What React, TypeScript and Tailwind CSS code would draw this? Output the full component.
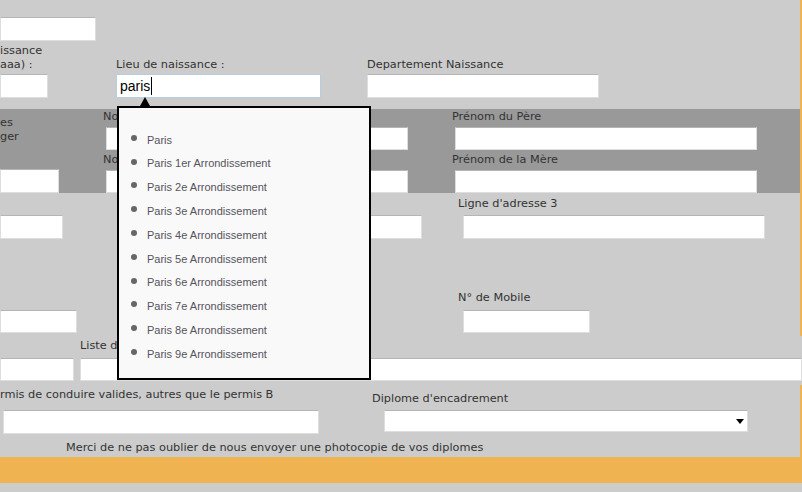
import React from 'react';

const ORANGE = 'border-[#efb451]';

const field = 'block bg-white border border-[#dedede] border-t-[#b5b5b5] outline-none';

const CITIES = [
  'Paris',
  'Paris 1er Arrondissement',
  'Paris 2e Arrondissement',
  'Paris 3e Arrondissement',
  'Paris 4e Arrondissement',
  'Paris 5e Arrondissement',
  'Paris 6e Arrondissement',
  'Paris 7e Arrondissement',
  'Paris 8e Arrondissement',
  'Paris 9e Arrondissement',
];

function Label({ children, className = '' }: { children: React.ReactNode; className?: string }) {
  return <div className={`leading-[14px] whitespace-nowrap ${className}`}>{children}</div>;
}

export default function App() {
  return (
    <div className="relative w-[802px] h-[492px] overflow-hidden bg-[#cccccc] font-['DejaVu_Sans',sans-serif] text-[11.3px] text-[#333]">
      {/* identite / naissance */}
      <div className={`h-[109px] pt-[17px] border-r-2 ${ORANGE}`}>
        <input className={`${field} w-[96px] h-[24px]`} readOnly />
        <div className="flex items-end mt-[3px]">
          <div className="w-[48px]">
            <Label>issance<br />aaa) :</Label>
            <input className={`${field} w-[48px] h-[24px] mt-[2px]`} readOnly />
          </div>
          <div className="ml-[68px] w-[205px]">
            <Label>Lieu de naissance :</Label>
            <div className="mt-[2px] w-[205px] h-[24px] bg-white border border-[#b9cde0] flex items-center pl-[3px] font-['Liberation_Sans',sans-serif] text-[14px] text-black">
              paris<span className="w-px h-[18px] bg-black ml-px" />
            </div>
          </div>
          <div className="ml-[46px] w-[232px]">
            <Label>Departement Naissance</Label>
            <input className={`${field} w-[232px] h-[24px] mt-[2px]`} readOnly />
          </div>
        </div>
      </div>

      {/* parents */}
      <div className={`h-[84px] bg-[#999999] border-r-2 ${ORANGE} flex`}>
        <div className="w-[59px] pt-[7px]">
          <Label>es</Label>
          <Label>ger</Label>
          <input className={`${field} w-[59px] h-[24px] mt-[25px]`} readOnly />
        </div>
        <div className="ml-[44px] pt-[1px]">
          <Label>No</Label>
          <input className={`${field} ml-[3px] mt-[3px] w-[302px] h-[23px]`} readOnly />
          <Label className="mt-[3px]">No</Label>
          <input className={`${field} ml-[3px] mt-[3px] w-[302px] h-[23px]`} readOnly />
        </div>
        <div className="ml-[44px] pt-[1px]">
          <Label>Prénom du Père</Label>
          <input className={`${field} ml-[3px] mt-[3px] w-[302px] h-[23px]`} readOnly />
          <Label className="mt-[3px]">Prénom de la Mère</Label>
          <input className={`${field} ml-[3px] mt-[3px] w-[302px] h-[23px]`} readOnly />
        </div>
      </div>

      {/* adresse */}
      <div className={`h-[143px] pt-[4px] border-r-2 ${ORANGE}`}>
        <Label className="pl-[458px]">Ligne d'adresse 3</Label>
        <div className="flex mt-[4px]">
          <input className={`${field} w-[63px] h-[24px]`} readOnly />
          <input className={`${field} ml-[57px] w-[302px] h-[24px]`} readOnly />
          <input className={`${field} ml-[41px] w-[302px] h-[24px]`} readOnly />
        </div>
        <Label className="pl-[458px] mt-[52px]">N° de Mobile</Label>
        <div className="flex mt-[5px]">
          <input className={`${field} w-[77px] h-[23px]`} readOnly />
          <input className={`${field} ml-[386px] w-[127px] h-[23px]`} readOnly />
        </div>
      </div>

      {/* diplomes */}
      <div className="h-[49px] pt-[3px]">
        <Label className="pl-[80px]">Liste d</Label>
        <div className="flex mt-[5px]">
          <input className={`${field} w-[74px] h-[23px]`} readOnly />
          <input className={`${field} ml-[6px] flex-1 h-[23px]`} readOnly />
        </div>
      </div>

      <div className={`h-[72px] pt-[3px] border-r-2 ${ORANGE}`}>
        <div className="flex items-start">
          <div className="w-[319px]">
            <Label>rmis de conduire valides, autres que le permis B</Label>
            <input className={`${field} ml-[3px] mt-[8px] w-[316px] h-[24px]`} readOnly />
          </div>
          <div className="ml-[53px] pt-[4px]">
            <Label>Diplome d'encadrement</Label>
            <div className={`${field} ml-[12px] mt-[4px] w-[364px] h-[22px] flex items-center justify-end pr-[3px]`}>
              <span className="w-0 h-0 border-l-[4px] border-r-[4px] border-t-[5px] border-l-transparent border-r-transparent border-t-black" />
            </div>
          </div>
        </div>
        <Label className="pl-[66px] mt-[7px]">Merci de ne pas oublier de nous envoyer une photocopie de vos diplomes</Label>
      </div>

      <div className="h-[26px] bg-[#efb451]" />

      {/* autocomplete lieu de naissance */}
      <div className="absolute left-[140px] top-[97px] w-0 h-0 border-l-[5px] border-r-[5px] border-b-[9px] border-l-transparent border-r-transparent border-b-black" />
      <div className="absolute left-[117px] top-[106px] w-[254px] h-[274px] border-2 border-black bg-[#f9f9f9]">
        <ul className="pt-[20px] font-['Liberation_Sans',sans-serif] text-[11px] text-[#56535c]">
          {CITIES.map((c) => (
            <li key={c} className="h-[23.8px] flex items-center">
              <span className="ml-[12px] mb-[4px] w-[6px] h-[6px] rounded-full bg-[#666]" />
              <span className="ml-[10px]">{c}</span>
            </li>
          ))}
        </ul>
      </div>
    </div>
  );
}
